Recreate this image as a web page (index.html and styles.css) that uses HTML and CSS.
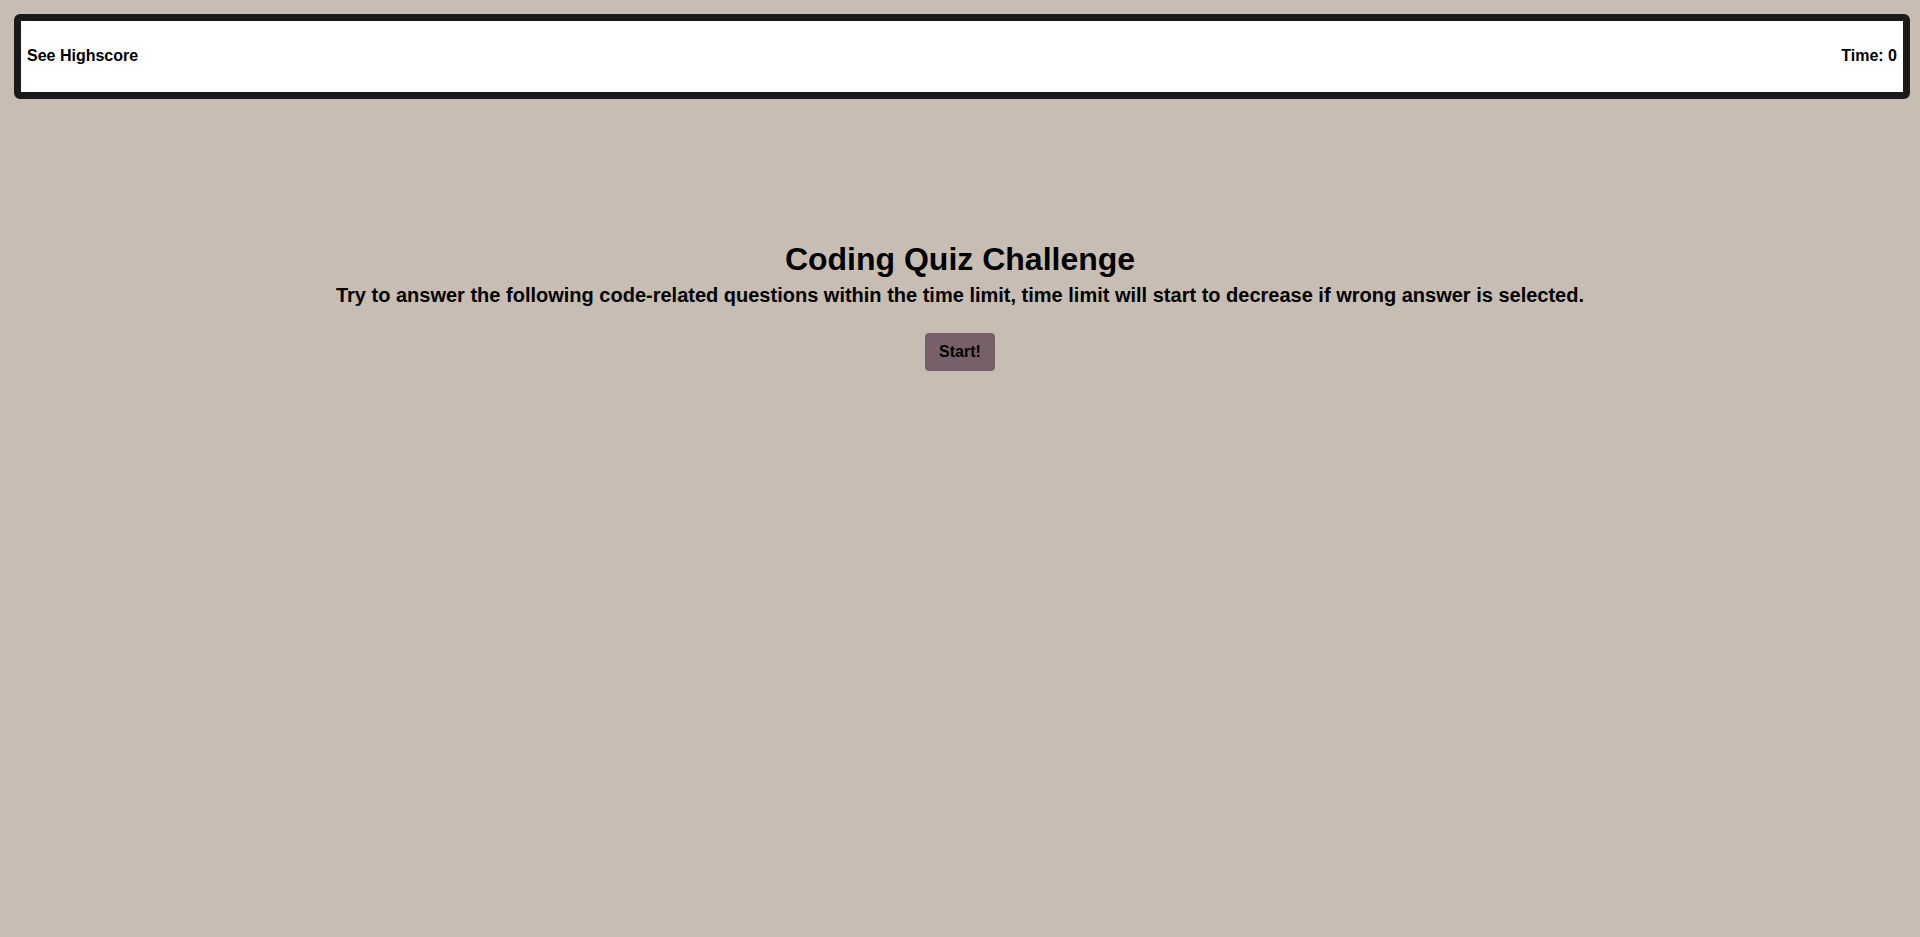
FILE: index.html
```html
<!DOCTYPE html>
<html lang="en">
<head>
<meta charset="utf-8">
<title>Coding Quiz Challenge</title>
<link rel="stylesheet" href="styles.css">
</head>
<body>
<header class="topbar">
  <a class="highscore-link">See Highscore</a>
  <span class="timer">Time: 0</span>
</header>
<main class="intro">
  <h1 class="intro-title">Coding Quiz Challenge</h1>
  <p class="intro-text">Try to answer the following code-related questions within the time limit, time limit will start to decrease if wrong answer is selected.</p>
  <button class="start-btn" type="button">Start!</button>
</main>
</body>
</html>
```
FILE: styles.css
```css
html, body {
  margin: 0;
  padding: 0;
}
body {
  background: #c7bdb3;
  font-family: "Liberation Sans", Arial, sans-serif;
  color: #000;
  min-height: 937px;
}
.topbar {
  margin: 14px 10px 0 14px;
  height: 69px;
  box-sizing: content-box;
  border: 7px solid #1b191a;
  border-radius: 6px;
  background: #fff;
  display: flex;
  justify-content: space-between;
  align-items: center;
  padding: 0 6px 2px;
  font-size: 16px;
  font-weight: bold;
}
.highscore-link {
  color: #000;
  cursor: pointer;
}
.intro {
  padding-top: 142px;
  display: flex;
  flex-direction: column;
  align-items: center;
  text-align: center;
}
.intro-title {
  margin: 0;
  font-size: 32px;
  line-height: 37px;
  font-weight: bold;
}
.intro-text {
  margin: 6px 0 0;
  font-size: 20px;
  line-height: 22px;
  font-weight: bold;
}
.start-btn {
  margin-top: 27px;
  width: 70px;
  height: 38px;
  border: none;
  border-radius: 4px;
  background: #77606a;
  color: #000;
  font-family: "Liberation Sans", Arial, sans-serif;
  font-size: 16px;
  font-weight: bold;
  padding: 0;
  cursor: pointer;
}
```
